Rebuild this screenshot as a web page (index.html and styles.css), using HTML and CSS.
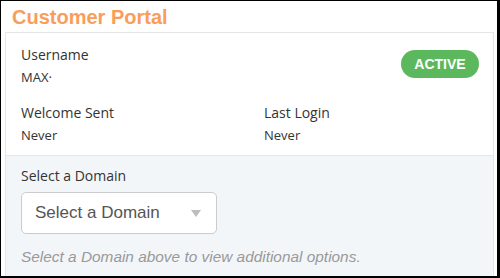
FILE: index.html
```html
<!DOCTYPE html>
<html>
<head>
<meta charset="utf-8">
<link rel="stylesheet" href="styles.css">
</head>
<body>
<div class="frame">
  <h1 class="title">Customer Portal</h1>
  <div class="card">
    <div class="card-body">
      <div class="row top-row">
        <div class="field">
          <div class="label">Username</div>
          <div class="value">MAX·</div>
        </div>
        <span class="badge">ACTIVE</span>
      </div>
      <div class="row cols">
        <div class="field">
          <div class="label">Welcome Sent</div>
          <div class="value">Never</div>
        </div>
        <div class="field">
          <div class="label">Last Login</div>
          <div class="value">Never</div>
        </div>
      </div>
    </div>
    <div class="card-footer">
      <div class="label">Select a Domain</div>
      <div class="select">
        <span class="select-text">Select a Domain</span>
        <span class="caret"></span>
      </div>
      <div class="help">Select a Domain above to view additional options.</div>
    </div>
  </div>
</div>
</body>
</html>
```

FILE: styles.css
```css
* { box-sizing: border-box; }
html, body { margin: 0; padding: 0; background: #fff; }
.frame {
  width: 500px;
  height: 278px;
  border-style: solid;
  border-color: #000;
  border-width: 1px 3px 2px 1px;
  overflow: hidden;
  background: #fff;
}
.title {
  margin: 0;
  padding: 4px 0 0 11px;
  height: 31px;
  font-family: "Liberation Sans", Arial, sans-serif;
  font-weight: bold;
  font-size: 20px;
  line-height: 24px;
  color: #f99d5b;
}
.card {
  margin-left: 4px;
  width: 489px;
  border: 1px solid #e6e6e6;
  height: 260px;
}
.card-body {
  padding: 12px 14px 11px 15px;
  background: #fff;
  border-bottom: 1px solid #e6e6e6;
}
.row { display: flex; }
.top-row { justify-content: space-between; align-items: flex-start; }
.cols .field { flex: none; width: 243px; }
.cols { margin-top: 17px; }
.label {
  font-family: "Open Sans", sans-serif;
  font-size: 14px;
  line-height: 19px;
  color: #333;
}
.value {
  font-family: "Open Sans", sans-serif;
  font-size: 13px;
  line-height: 18px;
  margin-top: 4px;
  color: #333;
}
.badge {
  margin-top: 5px;
  width: 78px;
  height: 28px;
  border-radius: 14px;
  background: #5cb85c;
  color: #fff;
  font-family: "Liberation Sans", Arial, sans-serif;
  font-weight: bold;
  font-size: 14px;
  display: flex;
  align-items: center;
  justify-content: center;
}
.card-footer {
  background: #f3f6f9;
  padding: 10px 15px;
  height: 200px;
}
.select {
  margin-top: 7px;
  width: 196px;
  height: 42px;
  background: #fff;
  border: 1px solid #ccc;
  border-radius: 5px;
  display: flex;
  align-items: center;
  justify-content: space-between;
  padding: 0 15px 0 13px;
}
.select-text {
  font-family: "Liberation Sans", Arial, sans-serif;
  font-size: 17px;
  color: #555;
}
.caret {
  width: 0;
  height: 0;
  border-left: 5px solid transparent;
  border-right: 5px solid transparent;
  border-top: 7px solid #bdbdbd;
}
.help {
  margin-top: 14px;
  font-family: "Liberation Sans", Arial, sans-serif;
  font-style: italic;
  font-size: 15.4px;
  line-height: 18px;
  color: #999;
}
```
